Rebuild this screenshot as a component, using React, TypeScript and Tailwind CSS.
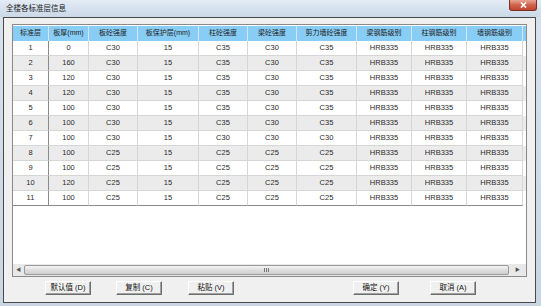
const cols = "grid-cols-[36px_40px_49px_61px_49px_49px_60px_55px_55px_56px]";

const headers = ["标准层", "板厚(mm)", "板砼强度", "板保护层(mm)", "柱砼强度", "梁砼强度", "剪力墙砼强度", "梁钢筋级别", "柱钢筋级别", "墙钢筋级别"];

const rows: (string | number)[][] = [
  [1, 0, "C30", 15, "C35", "C30", "C35"],
  [2, 160, "C30", 15, "C35", "C30", "C35"],
  [3, 120, "C30", 15, "C35", "C30", "C35"],
  [4, 120, "C30", 15, "C35", "C30", "C35"],
  [5, 100, "C30", 15, "C35", "C30", "C35"],
  [6, 100, "C30", 15, "C35", "C30", "C35"],
  [7, 100, "C30", 15, "C30", "C30", "C30"],
  [8, 100, "C25", 15, "C25", "C25", "C25"],
  [9, 100, "C25", 15, "C25", "C25", "C25"],
  [10, 120, "C25", 15, "C25", "C25", "C25"],
  [11, 100, "C25", 15, "C25", "C25", "C25"],
];

function Btn({ label }: { label: string }) {
  return (
    <div className="w-[46px] h-[14px] bg-[#f0f0f0] border border-t-white border-l-white border-r-[#6e6e6e] border-b-[#6e6e6e] shadow-[inset_-1px_-1px_0_#a0a0a0] flex items-center justify-center text-[7.5px] text-[#111] whitespace-pre">
      {label}
    </div>
  );
}

export default function App() {
  return (
    <div
      className="w-[541px] h-[306px] bg-gradient-to-b from-[#d7e2ee] to-[#c9d5e2] flex flex-col relative overflow-hidden"
      style={{ fontFamily: '"Liberation Sans", "Noto Sans CJK SC", sans-serif' }}
    >
      {/* title bar */}
      <div className="h-[17px] flex items-center pl-[6px] text-[7.5px] text-[#1a1a1a] bg-gradient-to-b from-[#e4ecf5] via-[#d6e2ef] to-[#cbd8e6]">
        全楼各标准层信息
      </div>
      <div className="absolute top-0 right-[4px] w-[28px] h-[11px] rounded-b-[3px] border border-t-0 border-[#7a2e24] bg-gradient-to-b from-[#e8a493] via-[#d0624c] to-[#c04530] flex items-center justify-center">
        <svg width="7" height="6" viewBox="0 0 7 6">
          <path d="M1 0.5 L6 5.5 M6 0.5 L1 5.5" stroke="white" strokeWidth="1.6" />
        </svg>
      </div>

      {/* client */}
      <div className="flex-1 ml-[3px] mr-[5px] mb-[3px] border border-[#4a4a4a] bg-[#f0f0f0] flex flex-col">
        <div className="ml-[8px] mt-[6px] w-[515px] h-[253px] border border-[#8a8a8a] bg-white flex flex-col text-[#2a2a2a]">
          <div className="pt-px">
            <div className={`grid ${cols} bg-[#87cdf6] text-[7px] text-[#222]`}>
              {headers.map((h) => (
                <div key={h} className="h-[15px] border-r border-[#d5e6f0] flex items-center justify-center">
                  {h}
                </div>
              ))}
            </div>
            {rows.map((r, i) => {
              const cells = [...r, "HRB335", "HRB335", "HRB335"];
              const last = i === rows.length - 1;
              return (
                <div key={i} className={`grid ${cols} text-[7.5px] ${i % 2 ? "bg-[#ebebeb]" : "bg-white"}`}>
                  {cells.map((c, j) => (
                    <div
                      key={j}
                      className={`h-[15px] flex items-center justify-center border-b ${last ? "border-b-[#8a8a8a]" : "border-b-[#d6d6d6]"} border-r ${j === 0 ? "border-r-[#8a8a8a]" : "border-r-[#d6d6d6]"}`}
                    >
                      {c}
                    </div>
                  ))}
                </div>
              );
            })}
          </div>
          <div className="flex-1" />
          {/* horizontal scrollbar */}
          <div className="h-[12px] bg-[#e8e8e8] flex items-center">
            <div className="w-[11px] flex justify-center text-[5px] text-[#555]">◀</div>
            <div className="flex-1 h-[10px] rounded-[2px] border border-[#9a9a9a] bg-gradient-to-b from-[#f4f4f4] via-[#dedede] to-[#cfcfcf] flex items-center justify-center">
              <div className="flex gap-[1px]">
                <div className="w-px h-[4px] bg-[#777]" />
                <div className="w-px h-[4px] bg-[#777]" />
                <div className="w-px h-[4px] bg-[#777]" />
              </div>
            </div>
            <div className="w-[17px] flex justify-center text-[5px] text-[#555]">▶</div>
          </div>
        </div>

        {/* buttons */}
        <div className="flex mt-[4px] h-[14px]">
          <div className="ml-[41px]"><Btn label="默认值 (D)" /></div>
          <div className="ml-[25px]"><Btn label="复制 (C)" /></div>
          <div className="ml-[26px]"><Btn label="粘贴 (V)" /></div>
          <div className="ml-[119px]"><Btn label="确定 (Y)" /></div>
          <div className="ml-[31px]"><Btn label="取消 (A)" /></div>
        </div>
      </div>
    </div>
  );
}
